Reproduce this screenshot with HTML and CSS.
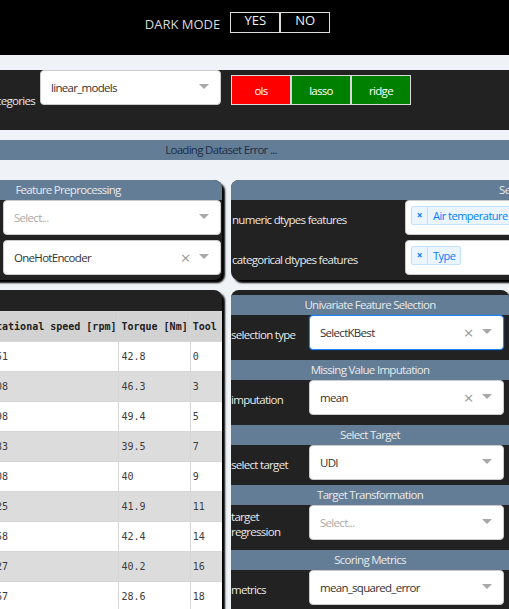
FILE: index.html
```html
<!DOCTYPE html>
<html lang="en">
<head>
<meta charset="utf-8">
<title>Regression Dashboard</title>
<link rel="stylesheet" href="styles.css">
</head>
<body>
<div class="page">
  <header class="topbar">
    <span class="mode-label">DARK MODE</span>
    <div class="mode-toggle">
      <button class="mode-btn">YES</button>
      <button class="mode-btn">NO</button>
    </div>
  </header>

  <section class="models">
    <div class="models-left">
      <span class="models-label">model categories</span>
      <div class="dd models-dd">
        <span class="dd-value">linear_models</span>
        <span class="dd-arrow-zone"><span class="dd-arrow"></span></span>
      </div>
    </div>
    <div class="model-btns">
      <button class="model-btn model-btn--active">ols</button>
      <button class="model-btn">lasso</button>
      <button class="model-btn">ridge</button>
    </div>
  </section>

  <div class="status-bar">Loading Dataset Error ...</div>

  <main class="grid">
    <div class="col col--left">
      <section class="panel panel--short">
        <h2 class="panel-title">Feature Preprocessing</h2>
        <div class="pre-row">
          <span class="pre-label">scaler</span>
          <div class="dd">
            <span class="dd-value dd-placeholder">Select...</span>
            <span class="dd-arrow-zone"><span class="dd-arrow"></span></span>
          </div>
        </div>
        <div class="pre-row">
          <span class="pre-label">encoder</span>
          <div class="dd">
            <span class="dd-value">OneHotEncoder</span>
            <span class="dd-clear">×</span>
            <span class="dd-arrow-zone"><span class="dd-arrow"></span></span>
          </div>
        </div>
      </section>

      <section class="panel panel--table">
        <table class="data-table">
          <thead>
            <tr><th>Rotational speed [rpm]</th><th>Torque [Nm]</th><th>Tool wear [min]</th><th>Target</th><th>Failure Type</th></tr>
          </thead>
          <tbody>
            <tr><td>1551</td><td>42.8</td><td>0</td><td>0</td><td>No Failure</td></tr>
            <tr><td>1408</td><td>46.3</td><td>3</td><td>0</td><td>No Failure</td></tr>
            <tr><td>1498</td><td>49.4</td><td>5</td><td>0</td><td>No Failure</td></tr>
            <tr><td>1433</td><td>39.5</td><td>7</td><td>0</td><td>No Failure</td></tr>
            <tr><td>1408</td><td>40</td><td>9</td><td>0</td><td>No Failure</td></tr>
            <tr><td>1425</td><td>41.9</td><td>11</td><td>0</td><td>No Failure</td></tr>
            <tr><td>1558</td><td>42.4</td><td>14</td><td>0</td><td>No Failure</td></tr>
            <tr><td>1527</td><td>40.2</td><td>16</td><td>0</td><td>No Failure</td></tr>
            <tr><td>1667</td><td>28.6</td><td>18</td><td>0</td><td>No Failure</td></tr>
            <tr><td>1741</td><td>28</td><td>21</td><td>0</td><td>No Failure</td></tr>
          </tbody>
        </table>
      </section>
    </div>

    <div class="col col--right">
      <section class="panel panel--short panel--wide">
        <h2 class="panel-title">Select Features</h2>
        <div class="feat-row">
          <span class="feat-label">numeric dtypes features</span>
          <div class="dd dd--multi">
            <span class="chip"><span class="chip-x">×</span><span class="chip-label">Air temperature [K]</span></span>
            <span class="chip"><span class="chip-x">×</span><span class="chip-label">Process temperature [K]</span></span>
            <span class="chip"><span class="chip-x">×</span><span class="chip-label">Rotational speed [rpm]</span></span>
          </div>
        </div>
        <div class="feat-row">
          <span class="feat-label">categorical dtypes features</span>
          <div class="dd dd--multi">
            <span class="chip"><span class="chip-x">×</span><span class="chip-label">Type</span></span>
          </div>
        </div>
      </section>

      <section class="panel panel--settings">
        <h3 class="sub-title sub-title--first">Univariate Feature Selection</h3>
        <div class="set-row">
          <span class="set-label">selection type</span>
          <div class="dd dd--focus">
            <span class="dd-value">SelectKBest</span>
            <span class="dd-clear">×</span>
            <span class="dd-arrow-zone"><span class="dd-arrow"></span></span>
          </div>
        </div>

        <h3 class="sub-title">Missing Value Imputation</h3>
        <div class="set-row">
          <span class="set-label">imputation</span>
          <div class="dd">
            <span class="dd-value">mean</span>
            <span class="dd-clear">×</span>
            <span class="dd-arrow-zone"><span class="dd-arrow"></span></span>
          </div>
        </div>

        <h3 class="sub-title">Select Target</h3>
        <div class="set-row">
          <span class="set-label">select target</span>
          <div class="dd">
            <span class="dd-value">UDI</span>
            <span class="dd-arrow-zone"><span class="dd-arrow"></span></span>
          </div>
        </div>

        <h3 class="sub-title sub-title--tight">Target Transformation</h3>
        <div class="set-row">
          <span class="set-label">target regression</span>
          <div class="dd">
            <span class="dd-value dd-placeholder">Select...</span>
            <span class="dd-arrow-zone"><span class="dd-arrow"></span></span>
          </div>
        </div>

        <h3 class="sub-title">Scoring Metrics</h3>
        <div class="set-row">
          <span class="set-label">metrics</span>
          <div class="dd">
            <span class="dd-value">mean_squared_error</span>
            <span class="dd-arrow-zone"><span class="dd-arrow"></span></span>
          </div>
        </div>
      </section>
    </div>
  </main>
</div>
</body>
</html>
```

FILE: styles.css
```css
html, body {
  margin: 0;
  padding: 0;
  overflow: hidden;
  background: #eff3f7;
}

body {
  font-family: "Open Sans", "Noto Sans", sans-serif;
  font-size: 11.5px;
  letter-spacing: -0.7px;
  color: #333;
}

.page {
  width: 614px;
  margin-left: -86px;
}

/* top bar */
.topbar {
  height: 55px;
  box-sizing: border-box;
  background: #000;
  display: flex;
  justify-content: center;
  align-items: flex-start;
  padding: 12px 0 0 33px;
}

.mode-label {
  font-size: 13px;
  letter-spacing: 0;
  line-height: 18px;
  margin-top: 2.5px;
  margin-right: 10px;
  color: #d9d9d9;
}

.mode-toggle {
  display: flex;
}

.mode-btn {
  width: 50px;
  height: 21px;
  box-sizing: border-box;
  border: 1px solid #dcdcdc;
  background: transparent;
  color: #f2f2f2;
  font-family: "Open Sans", sans-serif;
  font-size: 13px;
  line-height: 15px;
  padding: 0 0 4px;
}

/* model categories */
.models {
  margin-top: 15px;
  height: 60px;
  background: #222;
  display: flex;
  align-items: flex-start;
}

.models-left {
  width: 308px;
  height: 60px;
  flex: none;
  display: flex;
  align-items: flex-start;
}

.models-label {
  flex: 1;
  align-self: center;
  text-align: right;
  white-space: nowrap;
  padding-right: 5px;
  color: #e8e8e8;
}

.models-dd {
  width: 181px;
  margin-right: 1px;
}

.model-btns {
  display: flex;
  margin: 5px 0 0 9px;
}

.model-btn {
  width: 60px;
  height: 30px;
  box-sizing: border-box;
  border: 1px solid #d9d9d9;
  background: #008000;
  color: #fff;
  font: inherit;
  letter-spacing: -0.7px;
  padding: 0;
}

.model-btn--active {
  background: #ff0000;
}

/* status */
.status-bar {
  margin-top: 10px;
  height: 20px;
  line-height: 20px;
  background: #637d97;
  color: #1c2c44;
  text-align: center;
}

/* grid */
.grid {
  display: flex;
  align-items: flex-start;
  gap: 9px;
  margin-top: 20px;
}

.col {
  display: flex;
  flex-direction: column;
  gap: 10px;
  flex: none;
}

.col--left {
  width: 308px;
}

.col--right {
  width: 297px;
  align-items: flex-start;
}

.panel {
  background: #222;
  border-radius: 8px;
  box-shadow: 3px 3px 2px #000;
  overflow: hidden;
  box-sizing: border-box;
}

.panel--short {
  height: 100px;
}

.panel--wide {
  width: 607px;
}

.panel-title {
  margin: 0;
  height: 20px;
  line-height: 20px;
  background: #637d97;
  color: #e9e9e9;
  font-size: 11.5px;
  font-weight: normal;
  text-align: center;
}

/* dropdowns */
.dd {
  height: 35px;
  box-sizing: border-box;
  background: #fff;
  border: 1px solid #ccc;
  border-radius: 4px;
  display: flex;
  align-items: center;
  color: #333;
  overflow: hidden;
}

.dd-value {
  flex: 1;
  padding-left: 10px;
  white-space: nowrap;
  overflow: hidden;
}

.dd-placeholder {
  color: #aaa;
}

.dd-clear {
  width: 15px;
  text-align: center;
  color: #999;
  font-size: 17px;
  letter-spacing: 0;
  line-height: 1;
}

.dd-arrow-zone {
  width: 22px;
  padding-right: 5px;
  display: flex;
  justify-content: center;
}

.dd-arrow {
  width: 0;
  height: 0;
  border-style: solid;
  border-width: 5px 5px 2.5px;
  border-color: #a8a8a8 transparent transparent;
}

.dd--focus {
  border-color: #1a85ff;
  box-shadow: 0 0 0 1px rgba(0, 126, 255, 0.12);
}

.dd--multi {
  align-items: flex-start;
}

/* feature preprocessing rows */
.pre-row {
  display: flex;
  margin-bottom: 5px;
}

.pre-label {
  width: 89px;
  flex: none;
  color: #e8e8e8;
  align-self: center;
}

.pre-row .dd {
  flex: 1;
  margin-right: 1px;
}

/* feature selection rows */
.feat-row {
  display: flex;
  margin-bottom: 5px;
}

.feat-label {
  width: 174px;
  flex: none;
  align-self: center;
  padding: 4px 0 0 1px;
  box-sizing: border-box;
  color: #e8e8e8;
  white-space: nowrap;
}

.feat-row .dd {
  flex: 1;
  margin-right: 5px;
}

.chip {
  display: flex;
  flex: none;
  margin: 5px 0 0 5px;
  height: 19px;
  box-sizing: border-box;
  border: 1px solid #c2e0ff;
  border-radius: 2px;
  background: #ebf5ff;
  color: #007eff;
  font-size: 11px;
  letter-spacing: -0.5px;
  line-height: 17px;
  white-space: nowrap;
}

.chip-x {
  width: 15px;
  text-align: center;
  border-right: 1px solid #c2e0ff;
  font-size: 10px;
  font-weight: bold;
  letter-spacing: 0;
}

.chip-label {
  padding: 0 5px;
}

/* table */
.panel--table {
  height: 340px;
  padding-top: 21px;
}

.data-table {
  border-collapse: collapse;
  margin-left: 67px;
  font-family: "DejaVu Sans Mono", monospace;
  font-size: 10px;
  letter-spacing: 0;
  color: #3c3c3c;
}

.data-table tr {
  height: 30px;
}

.data-table th,
.data-table td {
  padding: 0 2px;
  border: 1px solid #d6d6d6;
  text-align: left;
  white-space: nowrap;
}

.data-table th {
  background: #d2d2d2;
  color: #222;
  font-weight: bold;
}

.data-table tbody tr:nth-child(odd) td {
  background: #fff;
}

.data-table tbody tr:nth-child(even) td {
  background: #dcdcdc;
}

/* settings panel */
.panel--settings {
  width: 278px;
  height: 340px;
  padding-top: 5px;
}

.sub-title {
  margin: 10px 0 0;
  height: 20px;
  line-height: 20px;
  background: #637d97;
  color: #e9e9e9;
  font-size: 11.5px;
  font-weight: normal;
  text-align: center;
}

.sub-title--first {
  margin-top: 0;
}

.sub-title--tight {
  margin-top: 5px;
}

.set-row {
  display: flex;
  align-items: center;
  height: 35px;
}

.set-label {
  width: 78px;
  flex: none;
  padding-top: 3px;
  line-height: 15px;
  color: #e8e8e8;
}

.set-row .dd {
  flex: 1;
  margin-right: 5px;
}
```
